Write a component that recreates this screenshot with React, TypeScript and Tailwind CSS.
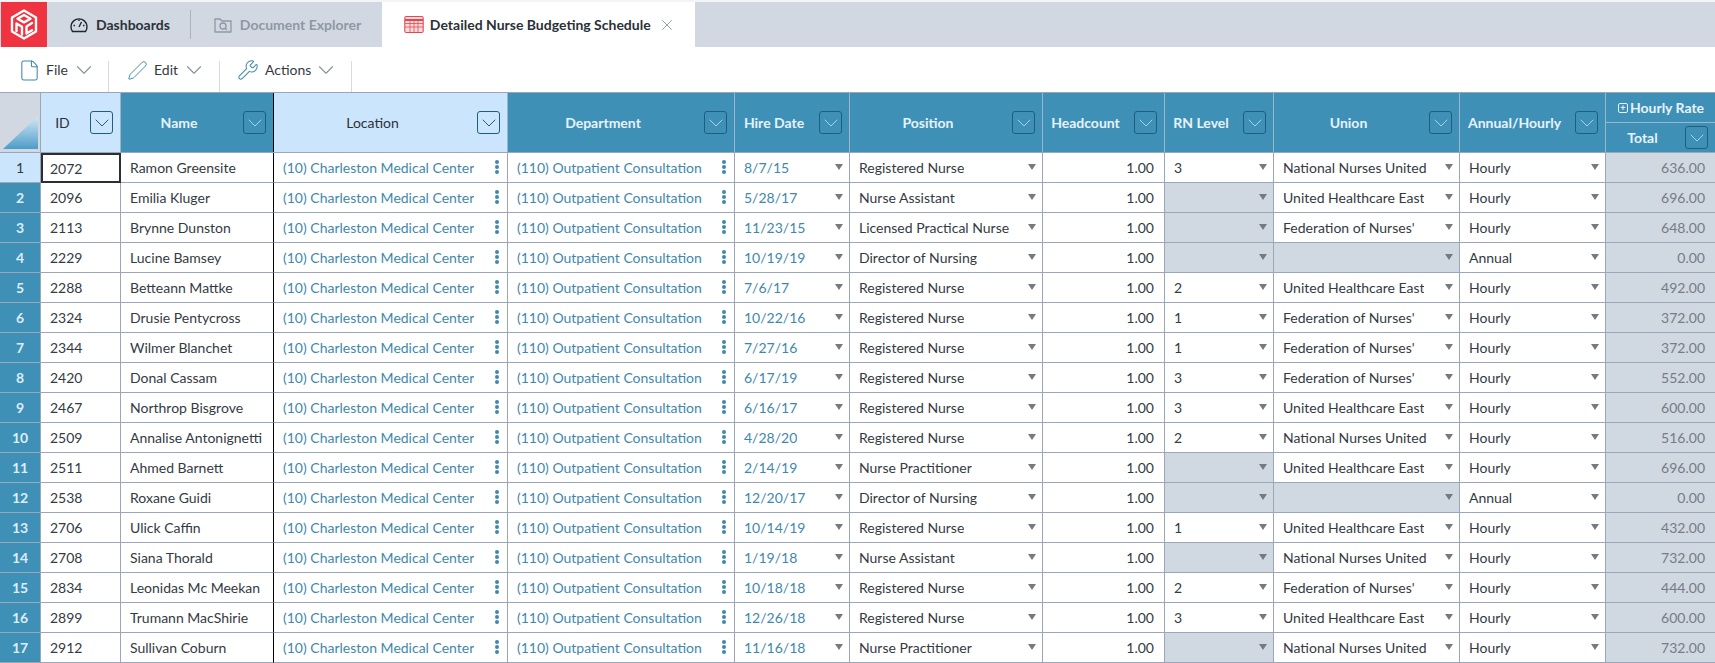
import { ChevronDown, X, File, Pen, Wrench } from "lucide-react";

type Row = {
  no: number;
  id: number;
  name: string;
  hire: string;
  position: string;
  rn: string;
  union: string;
  pay: string;
  total: string;
};

const ROWS: Row[] = [
  { no: 1, id: 2072, name: "Ramon Greensite", hire: "8/7/15", position: "Registered Nurse", rn: "3", union: "National Nurses United", pay: "Hourly", total: "636.00" },
  { no: 2, id: 2096, name: "Emilia Kluger", hire: "5/28/17", position: "Nurse Assistant", rn: "", union: "United Healthcare East", pay: "Hourly", total: "696.00" },
  { no: 3, id: 2113, name: "Brynne Dunston", hire: "11/23/15", position: "Licensed Practical Nurse", rn: "", union: "Federation of Nurses'", pay: "Hourly", total: "648.00" },
  { no: 4, id: 2229, name: "Lucine Bamsey", hire: "10/19/19", position: "Director of Nursing", rn: "", union: "", pay: "Annual", total: "0.00" },
  { no: 5, id: 2288, name: "Betteann Mattke", hire: "7/6/17", position: "Registered Nurse", rn: "2", union: "United Healthcare East", pay: "Hourly", total: "492.00" },
  { no: 6, id: 2324, name: "Drusie Pentycross", hire: "10/22/16", position: "Registered Nurse", rn: "1", union: "Federation of Nurses'", pay: "Hourly", total: "372.00" },
  { no: 7, id: 2344, name: "Wilmer Blanchet", hire: "7/27/16", position: "Registered Nurse", rn: "1", union: "Federation of Nurses'", pay: "Hourly", total: "372.00" },
  { no: 8, id: 2420, name: "Donal Cassam", hire: "6/17/19", position: "Registered Nurse", rn: "3", union: "Federation of Nurses'", pay: "Hourly", total: "552.00" },
  { no: 9, id: 2467, name: "Northrop Bisgrove", hire: "6/16/17", position: "Registered Nurse", rn: "3", union: "United Healthcare East", pay: "Hourly", total: "600.00" },
  { no: 10, id: 2509, name: "Annalise Antonignetti", hire: "4/28/20", position: "Registered Nurse", rn: "2", union: "National Nurses United", pay: "Hourly", total: "516.00" },
  { no: 11, id: 2511, name: "Ahmed Barnett", hire: "2/14/19", position: "Nurse Practitioner", rn: "", union: "United Healthcare East", pay: "Hourly", total: "696.00" },
  { no: 12, id: 2538, name: "Roxane Guidi", hire: "12/20/17", position: "Director of Nursing", rn: "", union: "", pay: "Annual", total: "0.00" },
  { no: 13, id: 2706, name: "Ulick Caffin", hire: "10/14/19", position: "Registered Nurse", rn: "1", union: "United Healthcare East", pay: "Hourly", total: "432.00" },
  { no: 14, id: 2708, name: "Siana Thorald", hire: "1/19/18", position: "Nurse Assistant", rn: "", union: "National Nurses United", pay: "Hourly", total: "732.00" },
  { no: 15, id: 2834, name: "Leonidas Mc Meekan", hire: "10/18/18", position: "Registered Nurse", rn: "2", union: "Federation of Nurses'", pay: "Hourly", total: "444.00" },
  { no: 16, id: 2899, name: "Trumann MacShirie", hire: "12/26/18", position: "Registered Nurse", rn: "3", union: "United Healthcare East", pay: "Hourly", total: "600.00" },
  { no: 17, id: 2912, name: "Sullivan Coburn", hire: "11/16/18", position: "Nurse Practitioner", rn: "", union: "National Nurses United", pay: "Hourly", total: "732.00" },
];

const GRID = "grid grid-cols-[41px_80px_153px_234px_227px_115px_193px_122px_109px_186px_146px_110px]";

// логотип — кубик на красном фоне
const Logo = () => (
  <svg viewBox="1 2 46 45" className="h-[45px] w-[46px]">
    <rect x="1" y="2" width="46" height="45" fill="#ef3340" />
    <g fill="none" stroke="#fff" strokeWidth="2.4" strokeLinejoin="round" strokeLinecap="round">
      <path d="M24 10.5 L36 17.5 V31.5 L24 38.5 L12 31.5 V17.5 Z" />
      <path d="M24 15 L30.5 18.7 L24 22.4 L17.5 18.7 Z" />
      <path d="M16.5 31 V23.5 L22 26.7 V34.5" />
      <path d="M32 23 L26.5 26.5 V33.5 L32 30.2" />
    </g>
  </svg>
);

const GaugeIcon = () => (
  <svg viewBox="0 0 20 20" className="h-[20px] w-[20px]" fill="none" stroke="#1f2733" strokeWidth="1.4">
    <path d="M3.5 16.5 A8 8 0 1 1 16.5 16.5 Z" strokeLinejoin="round" />
    <path d="M10 12 L12.5 7" />
    <path d="M10 4.5 V6 M4.5 10.5 H6 M14 10.5 H15.5" />
  </svg>
);

const FolderSearchIcon = () => (
  <svg viewBox="0 0 20 20" className="h-[20px] w-[20px]" fill="none" stroke="#8e98a4" strokeWidth="1.3">
    <path d="M2 4 H7 L9 6 H18 V17 H2 Z" strokeLinejoin="round" />
    <circle cx="10" cy="11" r="3" />
    <path d="M12 13.2 L14 15" />
  </svg>
);

const SheetIcon = () => (
  <svg viewBox="0 0 20 20" className="h-[20px] w-[20px]" fill="#fbdcdc" stroke="#e4484f" strokeWidth="1.1">
    <rect x="0.8" y="1.5" width="18.4" height="16" rx="1.5" />
    <path d="M1 5 H19" strokeWidth="2" />
    <path d="M1 8.5 H19 M1 12 H19 M6 5 V17 M10 5 V17 M14 5 V17" strokeWidth="0.8" />
  </svg>
);

const Caret = () => (
  <span className="h-0 w-0 shrink-0 border-x-[4px] border-t-[6px] border-x-transparent border-t-[#757a80]" />
);

const Dots = () => (
  <span className="flex shrink-0 flex-col gap-[1px]">
    <span className="h-[4px] w-[4px] rounded-full bg-[#3f88ab]" />
    <span className="h-[4px] w-[4px] rounded-full bg-[#3f88ab]" />
    <span className="h-[4px] w-[4px] rounded-full bg-[#3f88ab]" />
  </span>
);

const FilterBtn = ({ light }: { light?: boolean }) => (
  <span
    className={
      "flex h-[23px] w-[23px] shrink-0 items-center justify-center rounded-[3px] border border-[#1e5f7f] " +
      (light ? "text-[#1e5f7f]" : "text-[#a9d2e6]")
    }
  >
    <ChevronDown size={24} strokeWidth={1} className="shrink-0" />
  </span>
);

const HeadCell = ({ label, light, blackRight }: { label: string; light?: boolean; blackRight?: boolean }) => (
  <div
    className={
      "flex items-center pr-[7px] " +
      (light ? " bg-[#cbe5fc] text-[#2c3239] font-normal" : " bg-[#3f90b7] text-[#e6f3fa] font-bold") +
      (blackRight ? " border-r border-black" : " border-r border-[#9cb7c9]")
    }
  >
    <span className="min-w-0 flex-1 truncate pr-[6px] text-center">{label}</span>
    <FilterBtn light={light} />
  </div>
);

const CELL = "flex items-center border-r border-b border-[#9ba7b6] pb-[1px]";

const SelectCell = ({ value, disabled, colored }: { value: string; disabled?: boolean; colored?: boolean }) => (
  <div
    className={
      CELL +
      " justify-between pl-[9px] pr-[6px] " +
      (disabled ? "bg-[#d0d8e2] " : "") +
      (colored ? "text-[#3f88ab]" : "")
    }
  >
    <span className="truncate">{value}</span>
    <Caret />
  </div>
);

const GridRow = ({ row }: { row: Row }) => (
  <div className={GRID + " h-[30px] text-[14px] text-[#343a42]"}>
    <div
      className={
        "flex items-center justify-center border-r border-b border-[#9ba7b6] pb-[1px] " +
        (row.no === 1 ? "bg-[#cbe5fc] text-[#343a42]" : "bg-[#3f90b7] font-bold text-[#dcedf6]")
      }
    >
      {row.no}
    </div>
    <div className={row.no === 1 ? "flex items-center border-2 border-[#2a2f36] pl-[7px]" : CELL + " pl-[9px]"}>{row.id}</div>
    <div className="flex items-center border-r border-b border-[#9ba7b6] border-r-black pb-[1px] pl-[9px]">{row.name}</div>
    <div className={CELL + " justify-between pl-[9px] pr-[8px] text-[#3f88ab]"}>
      <span className="truncate">(10) Charleston Medical Center</span>
      <Dots />
    </div>
    <div className={CELL + " justify-between pl-[9px] pr-[8px] text-[#3f88ab]"}>
      <span className="truncate">(110) Outpatient Consultation</span>
      <Dots />
    </div>
    <SelectCell value={row.hire} colored />
    <SelectCell value={row.position} />
    <div className={CELL + " justify-end pr-[10px]"}>1.00</div>
    <SelectCell value={row.rn} disabled={row.rn === ""} />
    <SelectCell value={row.union} disabled={row.union === ""} />
    <SelectCell value={row.pay} />
    <div className={CELL + " justify-end bg-[#d0d8e2] pr-[10px] text-[#757c85]"}>{row.total}</div>
  </div>
);

const ToolbarItem = ({
  icon,
  label,
  width,
  textGap,
  chevronGap,
}: {
  icon: React.ReactNode;
  label: string;
  width: string;
  textGap: string;
  chevronGap: string;
}) => (
  <div className={"flex h-[31px] items-start border-r border-[#d5dbe2] " + width}>
    <span className="flex h-[18px] items-center">{icon}</span>
    <span className={"h-[18px] text-[14px] leading-[18px] text-[#343a42] " + textGap}>{label}</span>
    <span className={"flex h-[18px] items-center text-[#8b96a2] " + chevronGap}>
      <ChevronDown size={26} strokeWidth={1.1} />
    </span>
  </div>
);

export default function App() {
  return (
    <div className="h-[663px] w-[1715px] overflow-hidden bg-white font-['Lato',sans-serif]">
      {/* вкладки */}
      <div className="flex h-[47px] border-t-2 border-[#f3f4f6] bg-[#d1d8e2] pl-[1px]">
        <Logo />
        <div className="flex items-center pl-[22px] text-[14px] font-bold text-[#2b3138]">
          <GaugeIcon />
          <span className="ml-[7px]">Dashboards</span>
        </div>
        <div className="ml-[20px] mt-[8px] h-[29px] w-px bg-[#a9b3bf]" />
        <div className="flex w-[191px] items-center pl-[22px] text-[14px] font-bold text-[#8e98a4]">
          <FolderSearchIcon />
          <span className="ml-[7px]">Document Explorer</span>
        </div>
        <div className="flex w-[313px] items-center bg-white pl-[22px] text-[14px] font-bold text-[#2b3138]">
          <SheetIcon />
          <span className="ml-[6px]">Detailed Nurse Budgeting Schedule</span>
          <X size={18} strokeWidth={1.2} className="ml-[7px] text-[#8b96a2]" />
        </div>
      </div>
      {/* тулбар */}
      <div className="flex h-[46px] items-end border-b border-[#9ba7b6] pl-[1px]">
        <ToolbarItem
          icon={<File size={23} strokeWidth={1.1} className="ml-[17px] text-[#3f88ab]" />}
          label="File"
          width="w-[108px]"
          textGap="ml-[5px]"
          chevronGap="ml-[3px]"
        />
        <ToolbarItem
          icon={<Pen size={21} strokeWidth={1.1} className="ml-[18px] text-[#3f88ab]" />}
          label="Edit"
          width="w-[111px]"
          textGap="ml-[6px]"
          chevronGap="ml-[3px]"
        />
        <ToolbarItem
          icon={<Wrench size={22} strokeWidth={1.1} className="ml-[17px] text-[#3f88ab]" />}
          label="Actions"
          width="w-[132px]"
          textGap="ml-[6px]"
          chevronGap="ml-[2px]"
        />
      </div>
      {/* таблица */}
      <div className={GRID + " h-[60px] border-b border-[#9ba7b6] text-[14px]"}>
        <div className="relative border-r border-[#9ba7b6] bg-[#d1d8e2]">
          <span className="absolute bottom-[3px] left-[3px] h-[33px] w-[35px] bg-gradient-to-b from-[#d3e8f6] to-[#4a9dc8] [clip-path:polygon(100%_0,100%_100%,0_100%)]" />
        </div>
        <HeadCell label="ID" light />
        <HeadCell label="Name" blackRight />
        <HeadCell label="Location" light />
        <HeadCell label="Department" />
        <HeadCell label="Hire Date" />
        <HeadCell label="Position" />
        <HeadCell label="Headcount" />
        <HeadCell label="RN Level" />
        <HeadCell label="Union" />
        <HeadCell label="Annual/Hourly" />
        <div className="flex flex-col bg-[#3f90b7] font-bold text-[#e6f3fa]">
          <div className="flex h-[30px] items-center justify-center gap-[2px] border-b border-[#9cb7c9]">
            <span className="flex h-[10px] w-[10px] items-center justify-center rounded-[2px] border border-[#e6f3fa] text-[9px] leading-none">+</span>
            Hourly Rate
          </div>
          <div className="flex flex-1 items-center pr-[8px]">
            <span className="flex-1 pr-[6px] text-center">Total</span>
            <FilterBtn />
          </div>
        </div>
      </div>
      {ROWS.map((row) => (
        <GridRow key={row.no} row={row} />
      ))}
    </div>
  );
}
